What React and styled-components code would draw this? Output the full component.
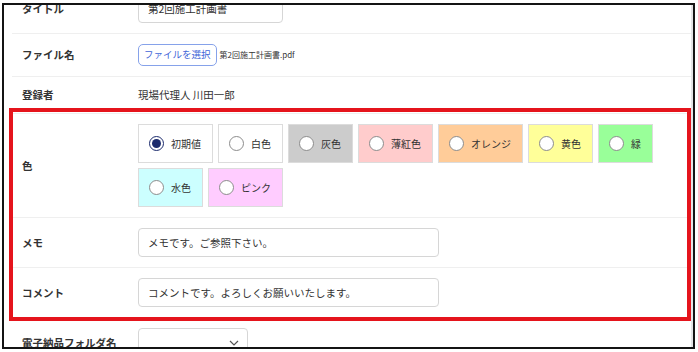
import React from "react";
import styled, { createGlobalStyle, css } from "styled-components";

const GlobalStyle = createGlobalStyle`
  html, body { margin: 0; padding: 0; background: #fff; }
  body {
    font-family: "Noto Sans CJK JP", "Noto Sans", sans-serif;
    color: #333;
  }
  * { box-sizing: border-box; }
`;

const Page = styled.div`
  width: 698px;
  height: 352px;
  padding: 3px 0 0 2px;
  background: #fff;
`;

const Frame = styled.div`
  width: 693px;
  height: 346px;
  border: 2px solid #141414;
  overflow: hidden;
`;

const Viewport = styled.div`
  height: 100%;
  padding-left: 8px;
  border-right: 2px solid #e4e4e6;
  overflow: hidden;
`;

const List = styled.div`
  margin-top: -21px;
  display: flex;
  flex-direction: column;
`;

const Row = styled.div`
  display: grid;
  grid-template-columns: 116px 1fr;
  align-items: center;
  padding: 10px 0 10px 10px;
  border-bottom: 1px solid #efefef;
`;

const Label = styled.div`
  font-size: 10.5px;
  font-weight: 700;
  color: #333;
  line-height: 16px;
`;

const Value = styled.div`
  display: flex;
  align-items: center;
  font-size: 10.5px;
  line-height: 16px;
  color: #333;
`;

const TextBox = styled.input`
  width: ${(p) => p.$w}px;
  height: 29px;
  border: 1px solid #d6d6d6;
  border-radius: 4px;
  padding: 0 9px;
  font-family: inherit;
  font-size: 10.5px;
  color: #333;
  background: #fff;
  outline: none;
`;

const FileButton = styled.button`
  height: 22px;
  padding: 0 5px;
  border: 1px solid #86a2ea;
  border-radius: 5px;
  background: #fff;
  color: #3f66d8;
  font-family: inherit;
  font-size: 9.5px;
  line-height: 1;
`;

const FileName = styled.span`
  margin-left: 3px;
  font-size: 8px;
  color: #333;
`;

const Highlight = styled.div`
  position: relative;
  display: flex;
  flex-direction: column;
  &::after {
    content: "";
    position: absolute;
    top: -6px;
    left: -3px;
    right: 0;
    bottom: -3px;
    border: 4px solid #e5141c;
    pointer-events: none;
  }
`;

const Swatches = styled.div`
  display: flex;
  flex-wrap: wrap;
  gap: 5px;
`;

const Swatch = styled.label`
  display: inline-flex;
  align-items: center;
  gap: 7px;
  height: 39px;
  padding: 0 11px 0 10px;
  border: 1px solid #dcdcdc;
  background: ${(p) => p.$bg};
  font-size: 10px;
  color: #333;
`;

const Radio = styled.span`
  position: relative;
  width: 15px;
  height: 15px;
  border-radius: 50%;
  background: #fff;
  border: 1px solid #8c8c8c;
  flex: none;
  ${(p) =>
    p.$checked &&
    css`
      border: 1.5px solid #1c2b6d;
      &::after {
        content: "";
        position: absolute;
        inset: 2px;
        border-radius: 50%;
        background: #1c2b6d;
      }
    `}
`;

const SelectBox = styled.div`
  width: 110px;
  height: 29px;
  border: 1px solid #d6d6d6;
  border-radius: 4px;
  display: flex;
  align-items: center;
  justify-content: flex-end;
  padding-right: 8px;
  color: #555;
`;

const colors = [
  { name: "初期値", bg: "#ffffff", checked: true },
  { name: "白色", bg: "#ffffff" },
  { name: "灰色", bg: "#cccccc" },
  { name: "薄紅色", bg: "#ffcccc" },
  { name: "オレンジ", bg: "#ffcc99" },
  { name: "黄色", bg: "#ffff99" },
  { name: "緑", bg: "#99ff99" },
  { name: "水色", bg: "#ccffff" },
  { name: "ピンク", bg: "#ffccff" },
];

export default function App() {
  return (
    <>
      <GlobalStyle />
      <Page>
        <Frame>
          <Viewport>
            <List>
              <Row>
                <Label>タイトル</Label>
                <Value>
                  <TextBox $w={145} defaultValue="第2回施工計画書" readOnly />
                </Value>
              </Row>
              <Row>
                <Label>ファイル名</Label>
                <Value>
                  <FileButton type="button">ファイルを選択</FileButton>
                  <FileName>第2回施工計画書.pdf</FileName>
                </Value>
              </Row>
              <Row>
                <Label>登録者</Label>
                <Value>現場代理人 川田一郎</Value>
              </Row>
              <Highlight>
                <Row>
                  <Label>色</Label>
                  <Swatches>
                    {colors.map((c) => (
                      <Swatch key={c.name} $bg={c.bg}>
                        <Radio $checked={c.checked} />
                        {c.name}
                      </Swatch>
                    ))}
                  </Swatches>
                </Row>
                <Row>
                  <Label>メモ</Label>
                  <Value>
                    <TextBox $w={301} defaultValue="メモです。ご参照下さい。" readOnly />
                  </Value>
                </Row>
                <Row>
                  <Label>コメント</Label>
                  <Value>
                    <TextBox
                      $w={301}
                      defaultValue="コメントです。よろしくお願いいたします。"
                      readOnly
                    />
                  </Value>
                </Row>
              </Highlight>
              <Row>
                <Label>電子納品フォルダ名</Label>
                <Value>
                  <SelectBox>
                    <svg width="10" height="6" viewBox="0 0 10 6" fill="none">
                      <path d="M1 1l4 4 4-4" stroke="#555" strokeWidth="1.2" />
                    </svg>
                  </SelectBox>
                </Value>
              </Row>
            </List>
          </Viewport>
        </Frame>
      </Page>
    </>
  );
}
